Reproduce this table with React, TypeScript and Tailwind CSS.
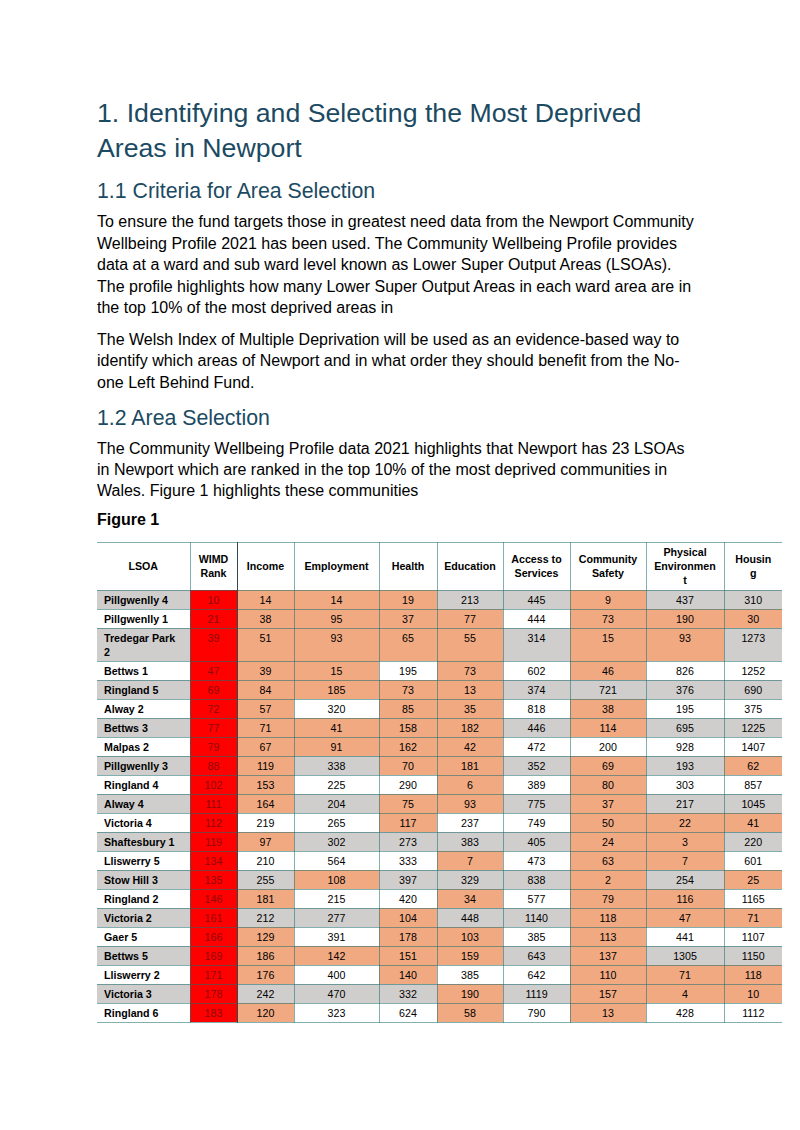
import React from "react";

const GREY = "bg-[#d0cecd]";
const ORANGE = "bg-[#f1a982]";
const WHITE = "bg-white";

// colour codes for Income .. Housing: O orange, G grey, W white
const rows: { name: React.ReactNode; rank: number; vals: number[]; fill: string }[] = [
  { name: "Pillgwenlly 4", rank: 10, vals: [14, 14, 19, 213, 445, 9, 437, 310], fill: "OOOGGOGG" },
  { name: "Pillgwenlly 1", rank: 21, vals: [38, 95, 37, 77, 444, 73, 190, 30], fill: "OOOOWOOO" },
  { name: <>Tredegar Park<br />2</>, rank: 39, vals: [51, 93, 65, 55, 314, 15, 93, 1273], fill: "OOOOGOOG" },
  { name: "Bettws 1", rank: 47, vals: [39, 15, 195, 73, 602, 46, 826, 1252], fill: "OOWOWOWW" },
  { name: "Ringland 5", rank: 69, vals: [84, 185, 73, 13, 374, 721, 376, 690], fill: "OOOOGGGG" },
  { name: "Alway 2", rank: 72, vals: [57, 320, 85, 35, 818, 38, 195, 375], fill: "OWOOWOWW" },
  { name: "Bettws 3", rank: 77, vals: [71, 41, 158, 182, 446, 114, 695, 1225], fill: "OOOOGOGG" },
  { name: "Malpas 2", rank: 79, vals: [67, 91, 162, 42, 472, 200, 928, 1407], fill: "OOOOWWWW" },
  { name: "Pillgwenlly 3", rank: 88, vals: [119, 338, 70, 181, 352, 69, 193, 62], fill: "OGOOGOGO" },
  { name: "Ringland 4", rank: 102, vals: [153, 225, 290, 6, 389, 80, 303, 857], fill: "OWWOWOWW" },
  { name: "Alway 4", rank: 111, vals: [164, 204, 75, 93, 775, 37, 217, 1045], fill: "OGOOGOGG" },
  { name: "Victoria 4", rank: 112, vals: [219, 265, 117, 237, 749, 50, 22, 41], fill: "WWOWWOOO" },
  { name: "Shaftesbury 1", rank: 119, vals: [97, 302, 273, 383, 405, 24, 3, 220], fill: "OGGGGOOG" },
  { name: "Lliswerry 5", rank: 134, vals: [210, 564, 333, 7, 473, 63, 7, 601], fill: "WWWOWOOW" },
  { name: "Stow Hill 3", rank: 135, vals: [255, 108, 397, 329, 838, 2, 254, 25], fill: "GOGGGOGO" },
  { name: "Ringland 2", rank: 146, vals: [181, 215, 420, 34, 577, 79, 116, 1165], fill: "OWWOWOOW" },
  { name: "Victoria 2", rank: 161, vals: [212, 277, 104, 448, 1140, 118, 47, 71], fill: "GGOGGOOO" },
  { name: "Gaer 5", rank: 166, vals: [129, 391, 178, 103, 385, 113, 441, 1107], fill: "OWOOWOWW" },
  { name: "Bettws 5", rank: 169, vals: [186, 142, 151, 159, 643, 137, 1305, 1150], fill: "OOOOGOGG" },
  { name: "Lliswerry 2", rank: 171, vals: [176, 400, 140, 385, 642, 110, 71, 118], fill: "OWOWWOOO" },
  { name: "Victoria 3", rank: 178, vals: [242, 470, 332, 190, 1119, 157, 4, 10], fill: "GGGOGOOO" },
  { name: "Ringland 6", rank: 183, vals: [120, 323, 624, 58, 790, 13, 428, 1112], fill: "OWWOWOWW" },
];

const headers: React.ReactNode[] = [
  "LSOA",
  <>WIMD<br />Rank</>,
  "Income",
  "Employment",
  "Health",
  "Education",
  <>Access to<br />Services</>,
  <>Community<br />Safety</>,
  <>Physical<br />Environmen<br />t</>,
  <>Housin<br />g</>,
];

const widths = [93, 47, 57, 85, 58, 66, 67, 76, 78, 58];

const line = "border border-[#1e6e6e]/55";

function fillClass(c: string) {
  if (c === "O") return ORANGE;
  if (c === "G") return GREY;
  return WHITE;
}

function DeprivationTable() {
  return (
    <table className="w-[685px] table-fixed border-collapse text-[10.67px] leading-[14px] text-black">
      <colgroup>
        {widths.map((w, i) => (
          <col key={i} style={{ width: w }} />
        ))}
      </colgroup>
      <thead>
        <tr>
          {headers.map((h, i) => (
            <th
              key={i}
              className={`${line} h-[48px] px-0.5 text-center align-middle font-bold ${i === 0 ? "border-l-0" : ""} ${
                i === 9 ? "border-r-0" : ""
              } ${i === 1 ? "border-r-[#2f4b4b]" : ""}`}
            >
              {h}
            </th>
          ))}
        </tr>
      </thead>
      <tbody>
        {rows.map((r, ri) => {
          const odd = ri % 2 === 0;
          return (
            <tr key={ri}>
              <td className={`${line} border-l-0 px-[7px] pt-[2px] pb-[2px] align-top font-bold ${odd ? GREY : WHITE}`}>
                {r.name}
              </td>
              <td className={`${line} border-r-[#2f4b4b] bg-[#ff0000] pt-[2px] pb-[2px] text-center align-top text-[#8e0a0a]`}>
                {r.rank}
              </td>
              {r.vals.map((v, vi) => (
                <td
                  key={vi}
                  className={`${line} ${vi === 7 ? "border-r-0" : ""} pt-[2px] pb-[2px] text-center align-top ${fillClass(
                    r.fill[vi]
                  )}`}
                >
                  {v}
                </td>
              ))}
            </tr>
          );
        })}
      </tbody>
    </table>
  );
}

export default function App() {
  return (
    <div className="min-h-[1130px] w-[800px] bg-white pl-[97px] pt-[96px] font-[family-name:'Liberation_Sans',Arial,sans-serif] text-black">
      <h1 className="text-[26.7px] font-normal leading-[35px] text-[#1b4a62]">
        1. Identifying and Selecting the Most Deprived
        <br />
        Areas in Newport
      </h1>

      <h2 className="mt-[12px] text-[21.3px] font-normal leading-[26px] text-[#1b4a62]">1.1 Criteria for Area Selection</h2>

      <p className="mt-[7px] text-[16px] leading-[21.5px]">
        To ensure the fund targets those in greatest need data from the Newport Community
        <br />
        Wellbeing Profile 2021 has been used. The Community Wellbeing Profile provides
        <br />
        data at a ward and sub ward level known as Lower Super Output Areas (LSOAs).
        <br />
        The profile highlights how many Lower Super Output Areas in each ward area are in
        <br />
        the top 10% of the most deprived areas in
      </p>

      <p className="mt-[10px] text-[16px] leading-[21.5px]">
        The Welsh Index of Multiple Deprivation will be used as an evidence-based way to
        <br />
        identify which areas of Newport and in what order they should benefit from the No-
        <br />
        one Left Behind Fund.
      </p>

      <h2 className="mt-[12px] text-[21.3px] font-normal leading-[26px] text-[#1b4a62]">1.2 Area Selection</h2>

      <p className="mt-[7px] text-[16px] leading-[21px]">
        The Community Wellbeing Profile data 2021 highlights that Newport has 23 LSOAs
        <br />
        in Newport which are ranked in the top 10% of the most deprived communities in
        <br />
        Wales. Figure 1 highlights these communities
      </p>

      <p className="mt-[8px] text-[16px] font-bold leading-[21.5px]">Figure 1</p>

      <div className="mt-[11px]">
        <DeprivationTable />
      </div>
    </div>
  );
}
